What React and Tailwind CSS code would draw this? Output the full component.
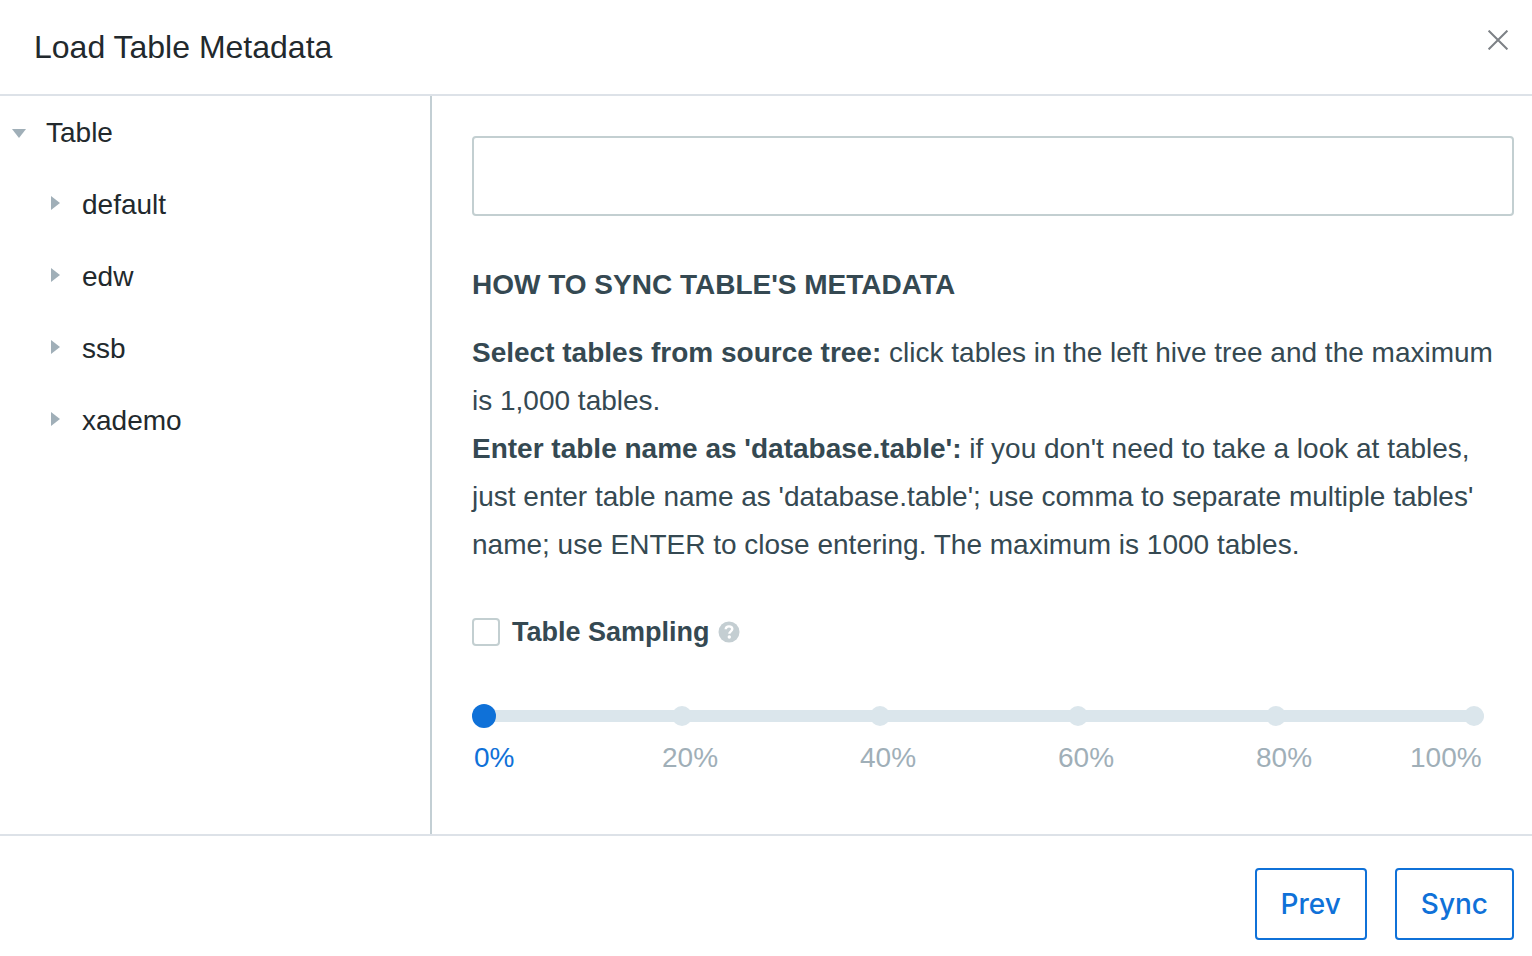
import { useState } from "react";

const databases = ["default", "edw", "ssb", "xademo"];
const stops = [0, 20, 40, 60, 80, 100];

function Caret({ open }) {
  return (
    <svg viewBox="0 0 14 18" className="h-[18px] w-[14px] shrink-0 fill-[#a0afb8]" aria-hidden="true">
      {open ? <path d="M0 5h14l-7 9z" /> : <path d="M3 0v14l9-7z" />}
    </svg>
  );
}

function TreeButton({ label, open, className }) {
  return (
    <button
      type="button"
      aria-expanded={open}
      className={"flex h-[72px] w-full items-center gap-5 text-left text-[28px] leading-8 text-[#22292d] " + className}
    >
      <Caret open={open} />
      <span>{label}</span>
    </button>
  );
}

function HelpIcon() {
  return (
    <svg viewBox="0 0 22 22" className="h-[22px] w-[22px]" aria-hidden="true">
      <circle cx="11" cy="11" r="10.5" fill="#c4ced2" />
      <path
        d="M7.7 8.3c.1-1.9 1.4-2.9 3.3-2.9s3.3 1 3.3 2.7c0 2.2-3 2.3-3 4.7"
        fill="none"
        stroke="#fff"
        strokeWidth="2.4"
      />
      <circle cx="11.3" cy="16" r="1.7" fill="#fff" />
    </svg>
  );
}

function SamplingSlider() {
  const [value, setValue] = useState(0);
  return (
    <div className="mt-12 mr-[30px]">
      <div className="grid items-center">
        <div className="col-start-1 row-start-1 ml-1 h-3 rounded-full bg-[#dbe6ec]" />
        <div className="col-start-1 row-start-1 ml-[2px] flex justify-between">
          {stops.map((stop) => (
            <span key={stop} className="h-5 w-5 rounded-full bg-[#dbe6ec]" />
          ))}
        </div>
        <input
          type="range"
          aria-label="Sampling percentage"
          min="0"
          max="100"
          step="20"
          value={value}
          onChange={(e) => setValue(Number(e.target.value))}
          className="col-start-1 row-start-1 m-0 h-6 w-full appearance-none bg-transparent [&::-webkit-slider-thumb]:h-6 [&::-webkit-slider-thumb]:w-6 [&::-webkit-slider-thumb]:appearance-none [&::-webkit-slider-thumb]:rounded-full [&::-webkit-slider-thumb]:bg-[#0f71d8]"
        />
      </div>
      <div className="mt-[14px] ml-[2px] grid grid-cols-[188fr_198fr_198fr_198fr_154fr_74fr] text-[28px] leading-8">
        {stops.map((stop) => (
          <span key={stop} className={stop === value ? "text-[#0f71d8]" : "text-[#a0afb8]"}>
            {stop}%
          </span>
        ))}
      </div>
    </div>
  );
}

function FooterButton({ children }) {
  return (
    <button
      type="button"
      className="h-[72px] rounded-[4px] border-2 border-[#0f71d8] px-6 font-[Inter,sans-serif] text-[28px] leading-8 font-medium text-[#0f71d8]"
    >
      {children}
    </button>
  );
}

export default function App() {
  return (
    <div className="flex min-h-screen flex-col bg-white font-['Liberation_Sans',Arial,sans-serif] text-[28px] text-[#354952]">
      <header className="flex items-start justify-between border-b-2 border-[#dde2e8] pr-6 pl-[34px]">
        <h1 className="py-[27px] text-[32px] leading-10 text-[#22292d]">Load Table Metadata</h1>
        <button type="button" aria-label="Close" className="mt-[30px]">
          <svg viewBox="0 0 20 20" className="h-5 w-5" fill="none" stroke="#7d8186" strokeWidth="2" aria-hidden="true">
            <path d="M.6.6l18.8 18.8M19.4.6L.6 19.4" />
          </svg>
        </button>
      </header>

      <main className="flex flex-1">
        <nav aria-label="Tables" className="w-[432px] shrink-0 border-r-2 border-[#c3cfd4] pt-px">
          <TreeButton label="Table" open className="pl-3" />
          <ul>
            {databases.map((name) => (
              <li key={name}>
                <TreeButton label={name} open={false} className="pl-12" />
              </li>
            ))}
          </ul>
        </nav>

        <section className="min-w-0 flex-1 pt-10 pr-[18px] pb-[60px] pl-10">
          <input
            type="text"
            aria-label="Table names"
            className="block h-20 w-full rounded-[4px] border-2 border-[#c3cfd1] px-4"
          />
          <h2 className="mt-[45px] leading-[48px] font-bold">HOW TO SYNC TABLE'S METADATA</h2>
          <p className="mt-5 leading-[48px]">
            <strong>Select tables from source tree:</strong> click tables in the left hive tree and the maximum is 1,000
            tables.
          </p>
          <p className="leading-[48px]">
            <strong>Enter table name as 'database.table':</strong> if you don't need to take a look at tables, just enter
            table name as 'database.table'; use comma to separate multiple tables' name; use ENTER to close entering. The
            maximum is 1000 tables.
          </p>

          <div className="mt-[39px] flex h-12 items-center">
            <input
              id="sampling"
              type="checkbox"
              className="h-7 w-7 appearance-none rounded-[4px] border-2 border-[#c3cfd1] checked:bg-[#0f71d8]"
            />
            <label htmlFor="sampling" className="ml-3 text-[27px] font-bold">
              Table Sampling
            </label>
            <span className="ml-2">
              <HelpIcon />
            </span>
          </div>

          <SamplingSlider />
        </section>
      </main>

      <footer className="flex justify-end gap-7 border-t-2 border-[#dde2e8] pt-8 pr-[18px] pb-4">
        <FooterButton>Prev</FooterButton>
        <FooterButton>Sync</FooterButton>
      </footer>
    </div>
  );
}
